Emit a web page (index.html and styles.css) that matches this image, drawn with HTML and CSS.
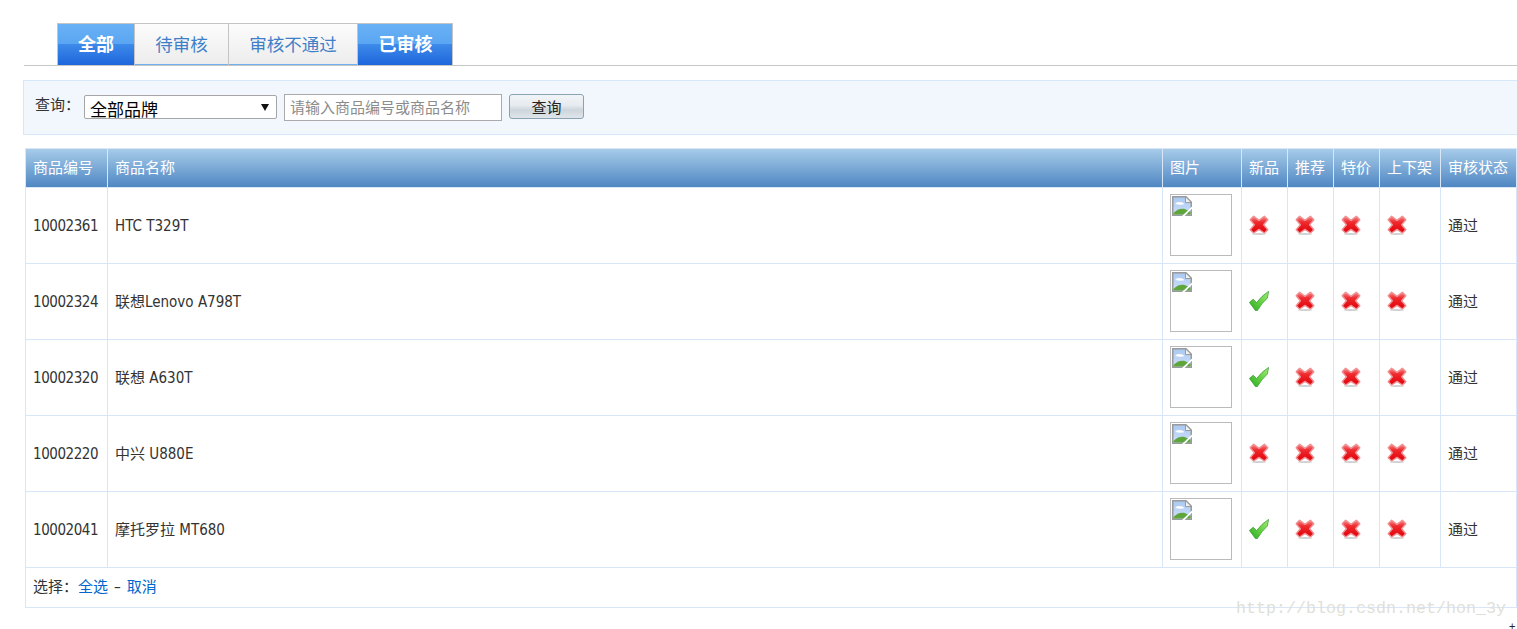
FILE: index.html
```html
<!DOCTYPE html>
<html lang="zh">
<head>
<meta charset="utf-8">
<title>商品审核</title>
<link rel="stylesheet" href="styles.css">
</head>
<body>
<svg class="sprite" width="0" height="0" aria-hidden="true">
  <defs>
    <linearGradient id="redg" x1="0" y1="0" x2="0" y2="1">
      <stop offset="0" stop-color="#f38d90"/>
      <stop offset="0.35" stop-color="#ef2a2e"/>
      <stop offset="1" stop-color="#e00008"/>
    </linearGradient>
    <linearGradient id="greeng" x1="1" y1="0" x2="0" y2="1">
      <stop offset="0" stop-color="#a3ea78"/>
      <stop offset="0.55" stop-color="#5ccd3c"/>
      <stop offset="1" stop-color="#2fa52a"/>
    </linearGradient>
    <linearGradient id="skyg" x1="0" y1="0" x2="0" y2="1">
      <stop offset="0" stop-color="#a9c8f2"/>
      <stop offset="1" stop-color="#cfe0f8"/>
    </linearGradient>
    <symbol id="ico-x" viewBox="0 0 20 20">
      <ellipse cx="10" cy="19" rx="7" ry="1" fill="#d2d2d2"/>
      <path d="M4.6 1.2 L10 5.4 L15.4 1.2 L18.8 4.8 L14.6 9.8 L18.8 14.8 L15.4 18 L10 14.4 L4.6 18 L1.2 14.8 L5.4 9.8 L1.2 4.8 Z" fill="url(#redg)" stroke="#f08f92" stroke-width="1.4" stroke-linejoin="round"/>
    </symbol>
    <symbol id="ico-ok" viewBox="0 0 20 20">
      <path d="M0.4 11.4 L4.2 8.2 L7.6 11.6 Q12.6 4.6 19.6 0.4 L18.4 7 Q13 11.8 8.2 19.8 L6.6 19.8 Z" fill="url(#greeng)" stroke="#2f9a2c" stroke-width="0.7" stroke-linejoin="round"/>
    </symbol>
    <symbol id="ico-broken" viewBox="0 0 20 20">
      <path d="M0.75 0.75 H14 L19.25 6 V19.25 H0.75 Z" fill="url(#skyg)" stroke="#9a9a9a" stroke-width="1.5"/>
      <path d="M13.5 0.75 V6.5 H19.25 Z" fill="#f4f4f4" stroke="#9a9a9a"/>
      <path d="M3 8 Q5 5.4 8 6.2 Q11 5.8 12.4 8.2 Q8 9.2 3 8 Z" fill="#ffffff"/>
      <path d="M1.5 18.5 V17 Q6 12 12 12.8 L18.5 15.5 V18.5 Z" fill="#5ea63c"/>
      <path d="M10 20 L20 10.5 V12.8 L12.6 20 Z" fill="#ffffff"/>
    </symbol>
  </defs>
</svg>

<nav class="tabs">
  <a class="tab tab-on tab-first">全部</a>
  <a class="tab tab-off tab-wait">待审核</a>
  <a class="tab tab-off tab-fail">审核不通过</a>
  <a class="tab tab-on tab-done">已审核</a>
</nav>

<form class="filter">
  <label class="filter-label">查询：</label>
  <span class="select-wrap">
    <select class="brand"><option>全部品牌</option></select>
    <span class="select-arrow"></span>
  </span>
  <input class="keyword" type="text" placeholder="请输入商品编号或商品名称">
  <button class="search" type="button">查询</button>
</form>

<table class="goods">
  <colgroup>
    <col class="c-no"><col class="c-name"><col class="c-pic"><col class="c-flag"><col class="c-flag"><col class="c-flag"><col class="c-shelf"><col class="c-state">
  </colgroup>
  <thead>
    <tr><th>商品编号</th><th>商品名称</th><th>图片</th><th>新品</th><th>推荐</th><th>特价</th><th>上下架</th><th>审核状态</th></tr>
  </thead>
  <tbody>
    <tr>
      <td class="no">10002361</td><td>HTC T329T</td>
      <td class="pic-cell"><div class="pic"><svg class="broken"><use href="#ico-broken"/></svg></div></td>
      <td><svg class="flag"><use href="#ico-x"/></svg></td>
      <td><svg class="flag"><use href="#ico-x"/></svg></td>
      <td><svg class="flag"><use href="#ico-x"/></svg></td>
      <td><svg class="flag"><use href="#ico-x"/></svg></td>
      <td>通过</td>
    </tr>
    <tr>
      <td class="no">10002324</td><td>联想Lenovo A798T</td>
      <td class="pic-cell"><div class="pic"><svg class="broken"><use href="#ico-broken"/></svg></div></td>
      <td><svg class="flag"><use href="#ico-ok"/></svg></td>
      <td><svg class="flag"><use href="#ico-x"/></svg></td>
      <td><svg class="flag"><use href="#ico-x"/></svg></td>
      <td><svg class="flag"><use href="#ico-x"/></svg></td>
      <td>通过</td>
    </tr>
    <tr>
      <td class="no">10002320</td><td>联想 A630T</td>
      <td class="pic-cell"><div class="pic"><svg class="broken"><use href="#ico-broken"/></svg></div></td>
      <td><svg class="flag"><use href="#ico-ok"/></svg></td>
      <td><svg class="flag"><use href="#ico-x"/></svg></td>
      <td><svg class="flag"><use href="#ico-x"/></svg></td>
      <td><svg class="flag"><use href="#ico-x"/></svg></td>
      <td>通过</td>
    </tr>
    <tr>
      <td class="no">10002220</td><td>中兴 U880E</td>
      <td class="pic-cell"><div class="pic"><svg class="broken"><use href="#ico-broken"/></svg></div></td>
      <td><svg class="flag"><use href="#ico-x"/></svg></td>
      <td><svg class="flag"><use href="#ico-x"/></svg></td>
      <td><svg class="flag"><use href="#ico-x"/></svg></td>
      <td><svg class="flag"><use href="#ico-x"/></svg></td>
      <td>通过</td>
    </tr>
    <tr>
      <td class="no">10002041</td><td>摩托罗拉 MT680</td>
      <td class="pic-cell"><div class="pic"><svg class="broken"><use href="#ico-broken"/></svg></div></td>
      <td><svg class="flag"><use href="#ico-ok"/></svg></td>
      <td><svg class="flag"><use href="#ico-x"/></svg></td>
      <td><svg class="flag"><use href="#ico-x"/></svg></td>
      <td><svg class="flag"><use href="#ico-x"/></svg></td>
      <td>通过</td>
    </tr>
  </tbody>
  <tfoot>
    <tr><td colspan="8">选择：<a class="link">全选</a><span class="dash">–</span><a class="link">取消</a></td></tr>
  </tfoot>
</table>

<div class="watermark">http://blog.csdn.net/hon_3y</div>
<div class="cursor-mark">+</div>
</body>
</html>
```
FILE: styles.css
```css
* { box-sizing: border-box; }
html, body { margin: 0; padding: 0; }
body {
  position: relative;
  height: 629px;
  overflow: hidden;
  background: #fff;
  color: #333;
  font: 15px/20px "DejaVu Sans Condensed", "Noto Sans CJK SC", sans-serif;
}
.sprite { position: absolute; }

.tabs {
  display: flex;
  height: 43px;
  margin: 23px 0 0 24px;
  padding-left: 33px;
  border-bottom: 1px solid #c6c6c6;
}
.tab {
  display: flex;
  align-items: center;
  justify-content: center;
  height: 42px;
  font-size: 18px;
  border-top: 1px solid #c4c4c4;
  border-right: 1px solid #c4c4c4;
}
.tab-first { width: 78px; border-left: 1px solid #c4c4c4; }
.tab-wait { width: 94px; }
.tab-fail { width: 129px; }
.tab-done { width: 95px; padding-left: 1px; }
.tab-on {
  color: #fff;
  font-weight: bold;
  background: linear-gradient(#69b1f5 0, #5aa6f2 48%, #3d8bea 48%, #1e66dc 100%);
}
.tab-off {
  color: #3f7fc8;
  font-size: 17.5px;
  background: linear-gradient(#fcfcfc, #ececec);
  box-shadow: inset 0 -1px 0 #6fb0ef;
}

.filter {
  display: flex;
  align-items: center;
  height: 55px;
  margin: 14px 0 0 23px;
  padding: 0 0 0 11px;
  background: #f2f7fd;
  border: 1px solid #d7e7fa;
  border-right: 0;
}
.filter-label { width: 49px; margin-top: -5px; }
.select-wrap {
  position: relative;
  display: block;
  width: 193px;
  height: 24px;
  margin-top: -1px;
}
.brand {
  display: block;
  width: 100%;
  height: 100%;
  padding: 4px 0 0 5px;
  appearance: none;
  -webkit-appearance: none;
  background: #fff;
  border: 1px solid #a6a6a6;
  border-radius: 2px;
  color: #000;
  font: 17px/20px "DejaVu Sans Condensed", "Noto Sans CJK SC", sans-serif;
}
.select-arrow {
  position: absolute;
  top: 9px;
  left: 177px;
  width: 0;
  height: 0;
  border-top: 7px solid #111;
  border-left: 4px solid transparent;
  border-right: 4px solid transparent;
  pointer-events: none;
}
.keyword {
  width: 218px;
  height: 27px;
  margin: 0 0 0 7px;
  padding: 0 5px;
  background: #fff;
  border: 1px solid #aaa;
  border-radius: 0;
  color: #333;
  font: 15px "DejaVu Sans Condensed", "Noto Sans CJK SC", sans-serif;
  outline: 0;
}
.keyword::placeholder { color: #8c8c8c; opacity: 1; }
.search {
  width: 75px;
  height: 25px;
  margin: -2px 0 0 7px;
  padding: 0;
  background: linear-gradient(#f2f5f7 0, #e6ebef 45%, #cdd6dc 65%, #dfe5ea 100%);
  border: 1px solid #8aa3b3;
  border-radius: 3px;
  color: #222;
  font: 15px "DejaVu Sans Condensed", "Noto Sans CJK SC", sans-serif;
}

.goods {
  width: 1492px;
  margin: 13px 0 0 25px;
  table-layout: fixed;
  border-collapse: separate;
  border-spacing: 0;
}
.c-no { width: 83px; }
.c-name { width: 1055px; }
.c-pic { width: 79px; }
.c-flag { width: 46px; }
.c-shelf { width: 61px; }
.c-state { width: 76px; }

.goods th, .goods td {
  padding: 0 0 0 7px;
  border-right: 1px solid #d9e6f8;
  border-bottom: 1px solid #d9e6f8;
  text-align: left;
  white-space: nowrap;
  font-weight: normal;
}
.goods th:first-child, .goods td:first-child { border-left: 1px solid #d9e6f8; }
.goods th {
  height: 40px;
  border-top: 1px solid #d9e6f8;
  color: #fff;
  background: linear-gradient(#a7cbe9, #4f87c3);
}
.goods tbody td { height: 76px; }
.goods tbody .no { letter-spacing: -0.45px; }
.goods tbody .pic-cell { padding-top: 6px; vertical-align: top; }
.goods tfoot td { height: 40px; padding-bottom: 1px; }

.pic {
  width: 62px;
  height: 62px;
  padding: 1px;
  border: 1px solid #bbb;
}
.broken { display: block; width: 20px; height: 20px; }
.flag { display: block; width: 20px; height: 20px; margin-top: -2px; }
.link { color: #0066cc; }
.dash { margin: 0 6px; color: #333; }

.watermark {
  position: absolute;
  left: 1236px;
  top: 600px;
  color: #dfdfd9;
  font: 16.67px/18px "Liberation Mono", monospace;
  white-space: nowrap;
}
.cursor-mark {
  position: absolute;
  left: 1509px;
  top: 619px;
  color: #222;
  font: 11px/14px "Liberation Sans", sans-serif;
}
```
